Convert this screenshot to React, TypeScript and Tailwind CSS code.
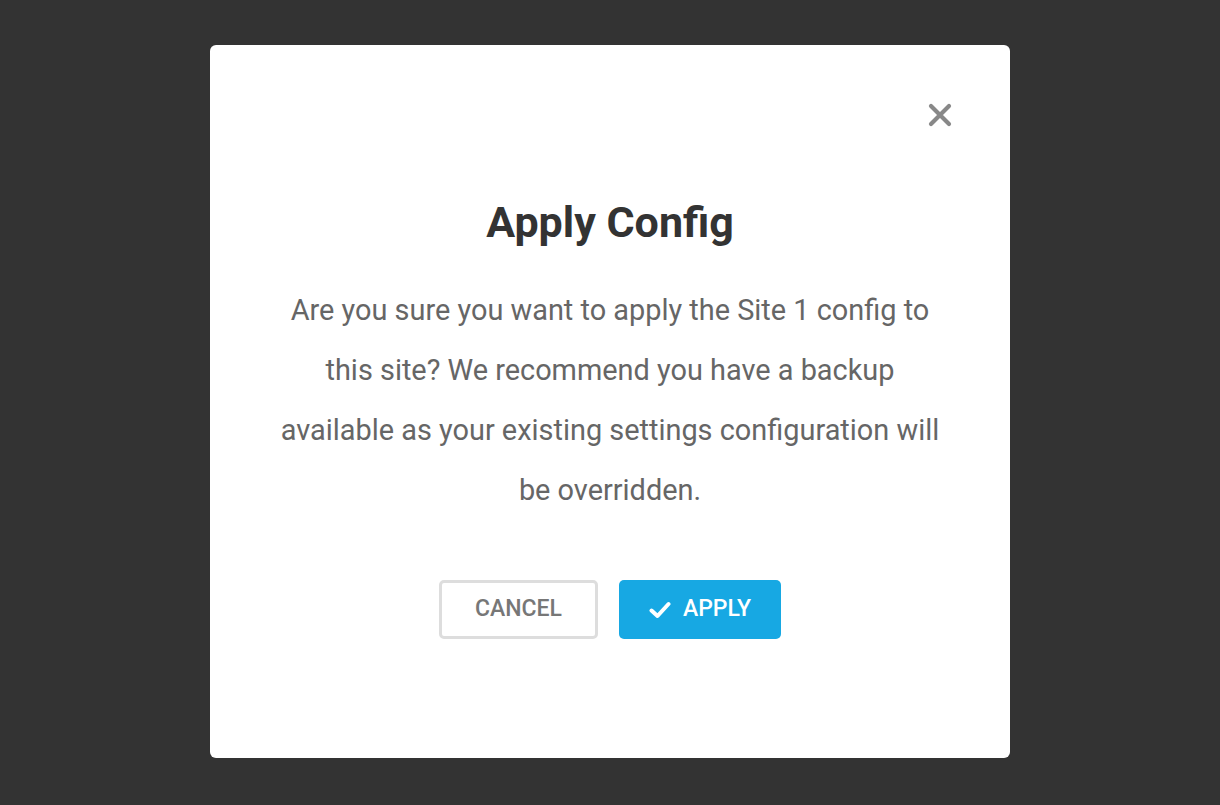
import React from "react";

export default function App() {
  return (
    <div
      className="min-h-screen w-full bg-[#333333] flex items-start justify-center pt-[45px]"
      style={{ fontFamily: "Roboto, 'Noto Sans', sans-serif" }}
    >
      <div className="w-[800px] h-[713px] bg-white rounded-[6px] flex flex-col pt-[58px] px-[58px]">
        <div className="flex justify-end">
          <button className="w-[24px] h-[24px] flex items-center justify-center text-[#888888]">
            <svg width="24" height="24" viewBox="0 0 24 24" fill="none">
              <path d="M3 3 L21 21 M21 3 L3 21" stroke="#888888" strokeWidth="4.2" strokeLinecap="round" />
            </svg>
          </button>
        </div>
        <h1 className="mt-[71px] text-center text-[43px] leading-[48px] font-bold text-[#333333]">
          Apply Config
        </h1>
        <p className="mt-[34px] mx-auto w-[680px] text-center text-[28.9px] leading-[60px] text-[#666666]">
          Are you sure you want to apply the Site 1 config to this site? We recommend you have a backup available as your existing settings configuration will be overridden.
        </p>
        <div className="mt-[60px] flex justify-center gap-[21px]">
          <button className="w-[159px] h-[59px] border-[3px] border-[#dddddd] rounded-[5px] text-[23px] font-medium text-[#777777] uppercase bg-white">
            Cancel
          </button>
          <button className="w-[162px] h-[59px] rounded-[5px] bg-[#17a8e3] text-white text-[23px] font-medium uppercase flex items-center justify-center gap-[12px]">
            <svg width="22" height="18" viewBox="0 0 22 18" fill="none">
              <path d="M2.5 9.5 L8.5 15 L19.5 3" stroke="white" strokeWidth="4" strokeLinecap="round" strokeLinejoin="round" />
            </svg>
            Apply
          </button>
        </div>
      </div>
    </div>
  );
}
